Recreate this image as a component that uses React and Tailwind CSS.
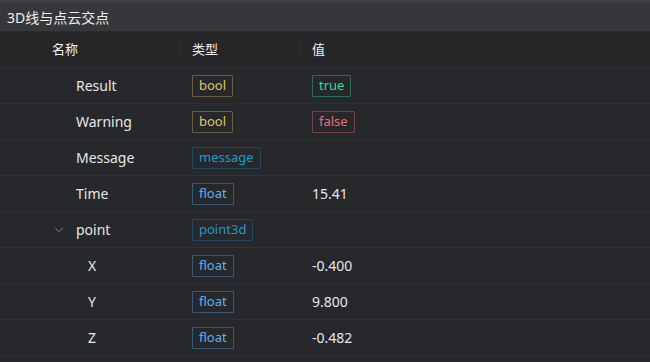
import { ChevronDown } from "lucide-react";

const tagStyle = {
  bool: "border-[#6b5c42] text-[#e8c35a]",
  message: "border-[#1d4a60] text-[#1c9bcb]",
  point3d: "border-[#1d4a60] text-[#1c9bcb]",
  float: "border-[#3a5a72] text-[#55b6f0]",
  true: "border-[#2d6b56] text-[#3ed99a]",
  false: "border-[#744346] text-[#f06a6c]",
};

const rows = [
  { name: "Result", type: "bool", value: "true", tag: true, level: 0 },
  { name: "Warning", type: "bool", value: "false", tag: true, level: 0 },
  { name: "Message", type: "message", value: "", level: 0 },
  { name: "Time", type: "float", value: "15.41", level: 0 },
  { name: "point", type: "point3d", value: "", level: 0, open: true },
  { name: "X", type: "float", value: "-0.400", level: 1 },
  { name: "Y", type: "float", value: "9.800", level: 1 },
  { name: "Z", type: "float", value: "-0.482", level: 1 },
];

const Tag = ({ children, kind }) => (
  <span className={`inline-flex h-[22px] items-center border px-[6px] text-[13px] leading-none rounded-[1px] ${tagStyle[kind]}`}>
    {children}
  </span>
);

export default function App() {
  return (
    <div
      className="w-[650px] h-[362px] bg-[#27282c] text-[#e6e6e6] overflow-hidden"
      style={{ fontFamily: '"Noto Sans", "Noto Sans CJK SC", sans-serif' }}
    >
      <div className="h-[32px] bg-[#36373b] border-t-[3px] border-t-[#3e3f44] border-b border-b-[#2a2b2f] flex items-center pl-[7px] text-[14px] text-[#ececec]">
        3D线与点云交点
      </div>
      <div className="h-[36px] bg-[#262629] border-b border-[#2f3034] flex items-center text-[13px] text-[#f0f0f0]">
        <div className="w-[179px] pl-[52px]">名称</div>
        <div className="w-[120px] flex items-center">
          <span className="w-px h-[18px] bg-[#303135]" />
          <span className="ml-[12px]">类型</span>
        </div>
        <div className="flex items-center">
          <span className="w-px h-[18px] bg-[#303135]" />
          <span className="ml-[12px]">值</span>
        </div>
      </div>
      {rows.map((r) => (
        <div key={r.name} className="h-[36px] border-b border-[#2f3034] flex items-center text-[14px]">
          <div className="w-[192px] flex items-center">
            <div className="w-[76px] flex justify-end pr-[10px]">
              {r.open && <ChevronDown size={14} strokeWidth={1.5} className="text-[#8a8b8f]" />}
            </div>
            <span className={r.level ? "ml-[12px]" : ""}>{r.name}</span>
          </div>
          <div className="w-[120px]">
            <Tag kind={r.type}>{r.type}</Tag>
          </div>
          <div>{r.tag ? <Tag kind={r.value}>{r.value}</Tag> : r.value}</div>
        </div>
      ))}
    </div>
  );
}
